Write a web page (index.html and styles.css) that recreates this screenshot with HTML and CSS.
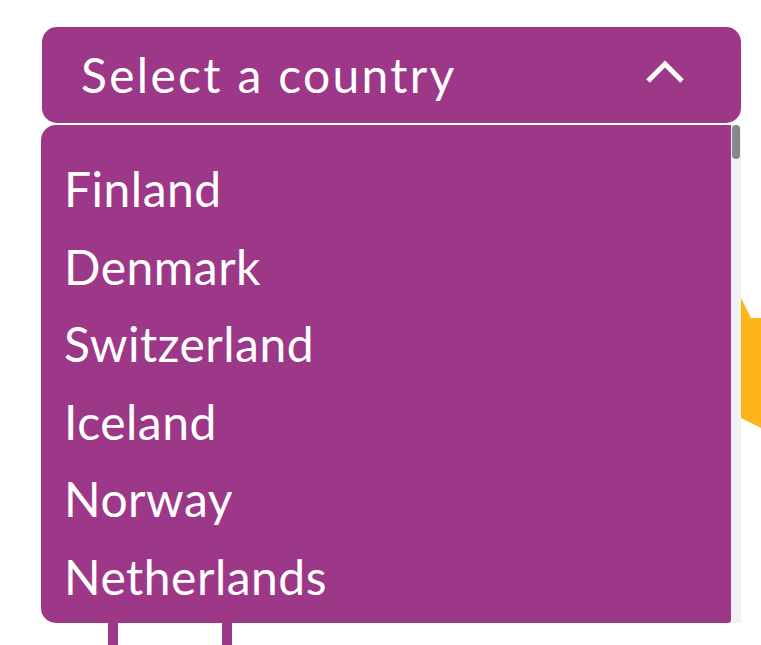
FILE: index.html
```html
<!DOCTYPE html>
<html>
<head>
<meta charset="utf-8">
<link rel="stylesheet" href="styles.css">
</head>
<body>
<div class="stage">
  <svg class="deco-star" width="30" height="140" viewBox="0 0 30 140">
    <polygon points="0,0 10,20 30,20 30,135 0,120" fill="#fdb51b"/>
  </svg>
  <div class="deco-legs"><span></span><span></span></div>
  <div class="dropdown">
    <button class="dropdown-head">
      <span class="dropdown-label">Select a country</span>
      <svg class="chevron" width="40" height="28" viewBox="0 0 40 28">
        <polyline points="3,24 20,7 37,24" fill="none" stroke="#fff" stroke-width="5" stroke-linecap="butt" stroke-linejoin="miter"/>
      </svg>
    </button>
    <div class="dropdown-panel">
      <ul class="dropdown-list">
        <li>Finland</li>
        <li>Denmark</li>
        <li>Switzerland</li>
        <li>Iceland</li>
        <li>Norway</li>
        <li>Netherlands</li>
      </ul>
      <div class="scroll-track"><div class="scroll-thumb"></div></div>
    </div>
  </div>
</div>
</body>
</html>
```
FILE: styles.css
```css
html, body {
  margin: 0;
  padding: 0;
  background: #ffffff;
  font-family: "Lato", "Noto Sans", sans-serif;
}
.stage {
  position: relative;
  width: 761px;
  height: 645px;
  overflow: hidden;
}
.deco-star {
  position: absolute;
  left: 741px;
  top: 298px;
}
.deco-legs {
  position: absolute;
  left: 108px;
  top: 600px;
  display: flex;
  gap: 104px;
}
.deco-legs span {
  display: block;
  width: 10px;
  height: 60px;
  background: #9d3787;
}
.dropdown {
  position: relative;
  padding: 27px 20px 0 41px;
  display: flex;
  flex-direction: column;
  gap: 2px;
}
.dropdown-head {
  margin-left: 1px;
  height: 96px;
  border: none;
  border-radius: 15px;
  background: #9d3787;
  color: #fff;
  font-family: inherit;
  font-size: 48px;
  font-weight: 400;
  display: flex;
  align-items: center;
  justify-content: space-between;
  padding: 0 56px 0 39px;
  cursor: pointer;
}
.dropdown-label {
  line-height: 1.2;
  letter-spacing: 2.3px;
}
.chevron {
  display: block;
  margin-top: -8px;
}
.dropdown-panel {
  display: flex;
  height: 498px;
}
.dropdown-list {
  flex: 1;
  list-style: none;
  margin: 0;
  padding: 25px 0 0 0;
  background: #9d3787;
  border-radius: 15px 0 3px 15px;
  color: #fff;
  font-size: 48px;
  line-height: 1.2;
}
.dropdown-list li {
  padding: 10px 22px 10px 23px;
  letter-spacing: 0.5px;
}
.scroll-track {
  width: 10px;
  background: #f1f1f1;
  padding: 0 1px;
  box-sizing: border-box;
}
.scroll-thumb {
  height: 34px;
  background: #888;
  border-radius: 4px;
}
```
